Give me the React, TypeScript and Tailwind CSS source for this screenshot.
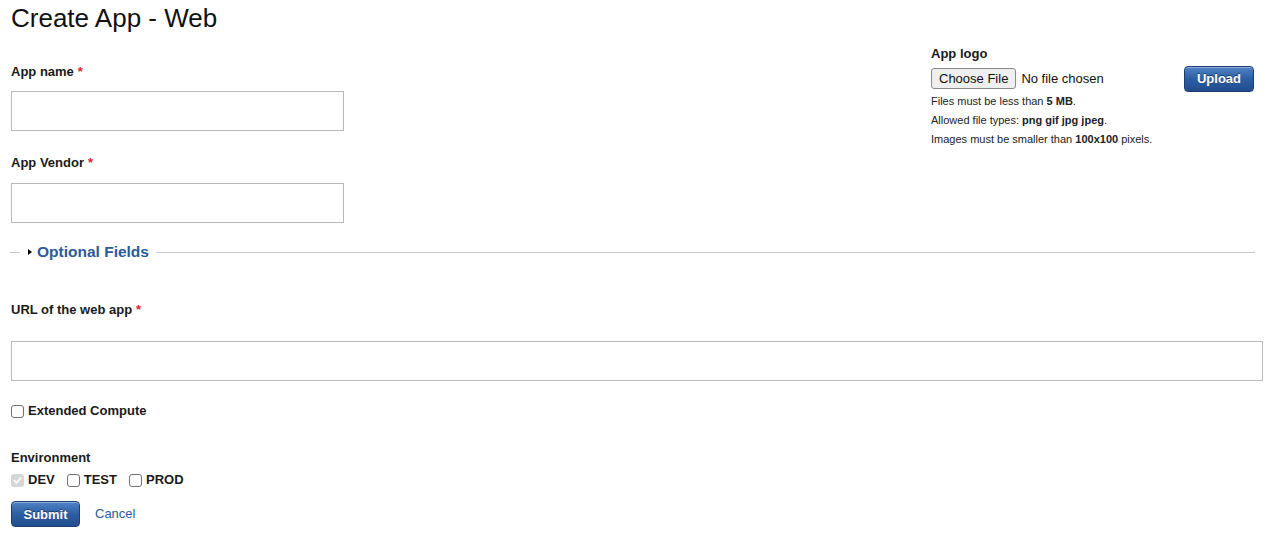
import React from "react";

const font = { fontFamily: '"Liberation Sans", Arial, sans-serif' };

function Req() {
  return <span className="text-[#e0242b] ml-[4px]">*</span>;
}

function Box({ checked, disabled }: { checked?: boolean; disabled?: boolean }) {
  if (disabled && checked) {
    return (
      <span className="inline-flex w-[13px] h-[13px] rounded-[3px] bg-[#d6d6d6] items-center justify-center">
        <svg width="9" height="9" viewBox="0 0 10 10">
          <path d="M1.5 5.2 L4 7.6 L8.6 2.2" stroke="#fff" strokeWidth="1.8" fill="none" strokeLinecap="round" strokeLinejoin="round" />
        </svg>
      </span>
    );
  }
  return <span className="inline-block w-[13px] h-[13px] rounded-[3px] border border-[#707070] bg-white" />;
}

function BlueButton({ children, className }: { children: React.ReactNode; className?: string }) {
  return (
    <button
      className={
        "rounded-[4px] border border-[#1c3f73] bg-gradient-to-b from-[#5083c6] via-[#2d5ea3] to-[#214d8c] text-white font-bold text-[13px] leading-none shadow-[inset_0_1px_0_rgba(255,255,255,0.35)] [text-shadow:0_-1px_0_rgba(0,0,0,0.45)] " +
        (className || "")
      }
      style={font}
    >
      {children}
    </button>
  );
}

export default function App() {
  return (
    <div className="bg-white w-[1266px] h-[554px] text-[#1a1a1a] relative" style={font}>
      <div className="pl-[11px] pr-[3px]">
        <div className="h-[34px] pt-[3px] text-[26px] leading-[30px] text-[#111]">Create App - Web</div>

        <div className="flex">
          <div className="w-[333px] pt-[30px]">
            <div className="text-[13px] font-bold leading-[16px]">
              App name<Req />
            </div>
            <div className="mt-[11px] h-[40px] border border-[#b9b9b9] bg-white" />
            <div className="mt-[24px] text-[13px] font-bold leading-[16px]">
              App Vendor<Req />
            </div>
            <div className="mt-[12px] h-[40px] border border-[#b9b9b9] bg-white" />
          </div>

          <div className="ml-auto w-[323px] mr-[9px] pt-[12px]">
            <div className="text-[13px] font-bold leading-[16px]">App logo</div>
            <div className="mt-[4px] flex items-center h-[25px]">
              <div className="h-[21px] px-[7px] flex items-center border border-[#8a8a8a] rounded-[3px] bg-[#efefef] text-[13px] text-[#111]">
                Choose File
              </div>
              <span className="ml-[5px] text-[13px] text-[#111]">No file chosen</span>
              <BlueButton className="ml-auto w-[70px] h-[26px]">Upload</BlueButton>
            </div>
            <div className="text-[11px] leading-[19px] text-[#222] mt-[1px]">
              <div>
                Files must be less than <b>5 MB</b>.
              </div>
              <div>
                Allowed file types: <b>png gif jpg jpeg</b>.
              </div>
              <div>
                Images must be smaller than <b>100x100</b> pixels.
              </div>
            </div>
          </div>
        </div>

        <div className="mt-[18px] mr-[8px] ml-[-1px] flex items-center h-[22px]">
          <div className="w-[10px] h-px bg-[#c8c8c8]" />
          <div className="ml-[8px] mr-[5px] w-0 h-0 border-y-[3.5px] border-y-transparent border-l-[4px] border-l-black" />
          <span className="text-[15.5px] font-bold text-[#2c5b98] leading-[20px]">Optional Fields</span>
          <div className="ml-[7px] flex-1 h-px bg-[#c8c8c8]" />
        </div>

        <div className="mt-[39px] text-[13px] font-bold leading-[16px]">
          URL of the web app<Req />
        </div>
        <div className="mt-[23px] h-[40px] border border-[#b9b9b9] bg-white" />

        <label className="mt-[22px] flex items-center h-[16px] text-[13px] font-bold">
          <Box />
          <span className="ml-[4px]">Extended Compute</span>
        </label>

        <div className="mt-[31px] text-[13px] font-bold leading-[16px]">Environment</div>
        <div className="mt-[6px] flex items-center h-[16px] text-[13px] font-bold">
          <Box checked disabled />
          <span className="ml-[4px]">DEV</span>
          <span className="ml-[12px] inline-flex items-center">
            <Box />
          </span>
          <span className="ml-[4px]">TEST</span>
          <span className="ml-[12px] inline-flex items-center">
            <Box />
          </span>
          <span className="ml-[4px]">PROD</span>
        </div>

        <div className="mt-[13px] flex items-center">
          <BlueButton className="w-[69px] h-[26px]">Submit</BlueButton>
          <a className="ml-[15px] text-[13px] text-[#2c5b98]">Cancel</a>
        </div>
      </div>
    </div>
  );
}
